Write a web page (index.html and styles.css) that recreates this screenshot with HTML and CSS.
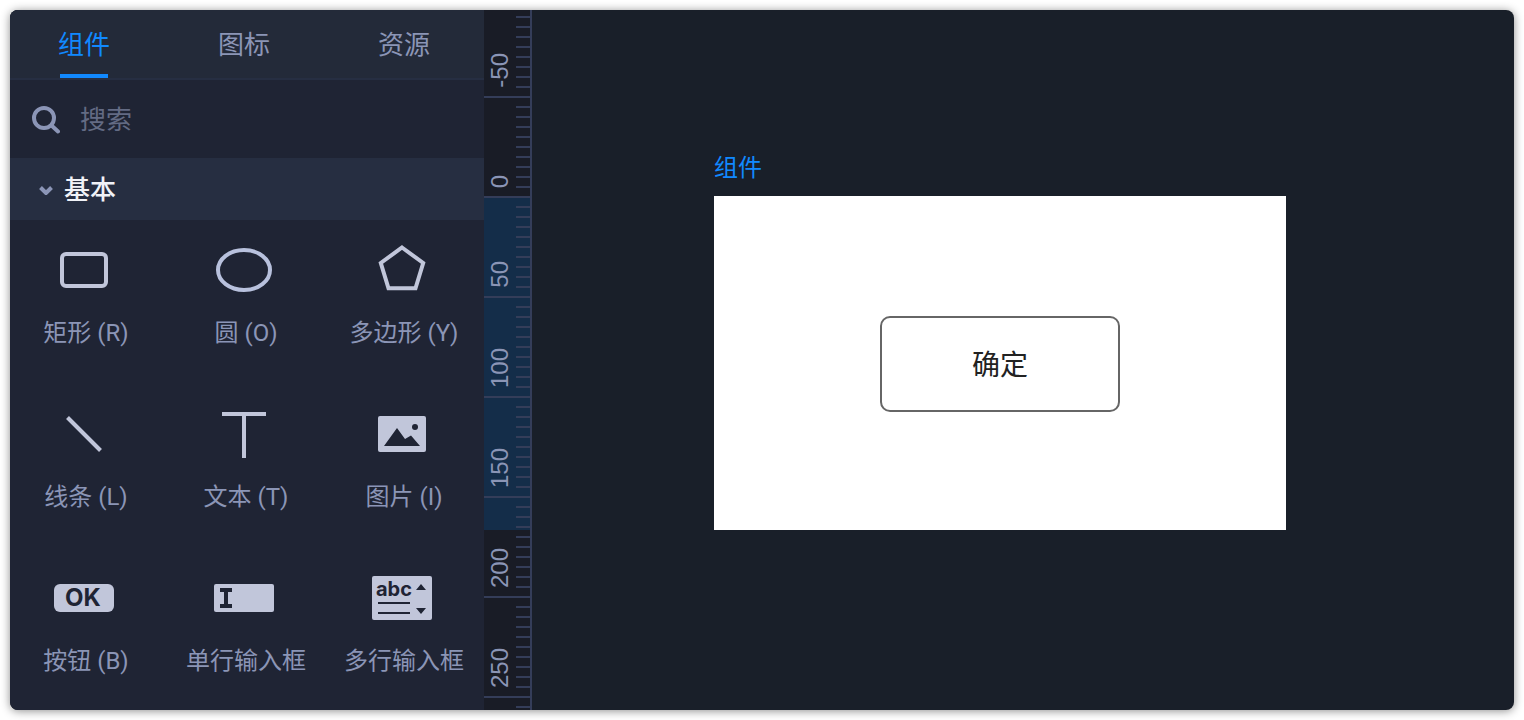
FILE: index.html
```html
<!DOCTYPE html>
<html lang="zh-CN">
<head>
<meta charset="utf-8">
<title>组件</title>
<link rel="stylesheet" href="styles.css">
</head>
<body>
<div class="app">
  <aside class="sidebar">
    <nav class="tabs">
      <button class="tab tab-active" type="button">组件</button>
      <button class="tab" type="button">图标</button>
      <button class="tab" type="button">资源</button>
    </nav>
    <label class="search">
      <svg class="search-icon" width="30" height="30" viewBox="0 0 30 30" fill="none" stroke="#8b95b6" stroke-width="4"><circle cx="14" cy="13" r="10"/><path d="M21.500 20.500L28 26.500" stroke-linecap="round"/></svg>
      <input class="search-input" type="search" placeholder="搜索" aria-label="搜索">
    </label>
    <button class="group" type="button">
      <svg width="14" height="14" viewBox="0 0 14 14" fill="none" stroke="#8b95b6" stroke-width="4"><path d="M1.500 6.500L7 12L12.500 6.500"/></svg>
      <span>基本</span>
    </button>
    <div class="tiles">
      <button class="tile" type="button">
        <svg class="tile-icon" viewBox="0 0 64 60"><rect x="10" y="14" width="44" height="32" rx="4" fill="none" stroke="#c1c6da" stroke-width="4"/></svg>
        <span class="tile-label">矩形 (R)</span>
      </button>
      <button class="tile" type="button">
        <svg class="tile-icon" viewBox="0 0 64 60"><ellipse cx="32" cy="30" rx="26" ry="20" fill="none" stroke="#b8c1dd" stroke-width="4"/></svg>
        <span class="tile-label">圆 (O)</span>
      </button>
      <button class="tile" type="button">
        <svg class="tile-icon" viewBox="0 0 64 60"><path d="M32 7.500L53.200 23L45.500 48.300H18.500L10.800 23Z" fill="none" stroke="#c1c6da" stroke-width="4"/></svg>
        <span class="tile-label">多边形 (Y)</span>
      </button>
      <button class="tile" type="button">
        <svg class="tile-icon" viewBox="0 0 64 60"><path d="M15.500 13.500L48.500 46.500" fill="none" stroke="#c1c6da" stroke-width="4"/></svg>
        <span class="tile-label">线条 (L)</span>
      </button>
      <button class="tile" type="button">
        <svg class="tile-icon" viewBox="0 0 64 60"><path d="M10 10H54M32 10V54" fill="none" stroke="#c1c6da" stroke-width="4"/></svg>
        <span class="tile-label">文本 (T)</span>
      </button>
      <button class="tile" type="button">
        <svg class="tile-icon" viewBox="0 0 64 60"><rect x="8" y="12" width="48" height="36" rx="2" fill="#c1c6da"/><path d="M14 42L27 24L35 35L41 31.500L50 42Z" fill="#1f2434"/><circle cx="45" cy="23" r="3" fill="#1f2434"/></svg>
        <span class="tile-label">图片 (I)</span>
      </button>
      <button class="tile" type="button">
        <svg class="tile-icon" viewBox="0 0 64 60"><rect x="2" y="16" width="60" height="28" rx="6" fill="#c1c6da"/><text class="ok-text" x="31" y="38" text-anchor="middle">OK</text></svg>
        <span class="tile-label">按钮 (B)</span>
      </button>
      <button class="tile" type="button">
        <svg class="tile-icon" viewBox="0 0 64 60"><rect x="2" y="16" width="60" height="28" rx="2" fill="#c1c6da"/><path d="M8 22H20M14 22V38M8 38H20" fill="none" stroke="#1f2434" stroke-width="4"/></svg>
        <span class="tile-label">单行输入框</span>
      </button>
      <button class="tile" type="button">
        <svg class="tile-icon" viewBox="0 0 64 60"><rect x="2" y="8" width="60" height="44" rx="2" fill="#c1c6da"/><text class="abc-text" x="24" y="28" text-anchor="middle">abc</text><path d="M8 35H40M8 45H40" stroke="#1f2434" stroke-width="2"/><path d="M46 22L51 16L56 22ZM46 40L51 46L56 40Z" fill="#1f2434"/></svg>
        <span class="tile-label">多行输入框</span>
      </button>
    </div>
  </aside>
  <div class="ruler">
    <div class="mark mark-first"><span>-50</span></div>
    <div class="mark"><span>0</span></div>
    <div class="mark"><span>50</span></div>
    <div class="mark"><span>100</span></div>
    <div class="mark"><span>150</span></div>
    <div class="mark"><span>200</span></div>
    <div class="mark"><span>250</span></div>
  </div>
  <main class="canvas">
    <section class="frame">
      <h1 class="frame-title">组件</h1>
      <div class="artboard">
        <button class="confirm" type="button">确定</button>
      </div>
    </section>
  </main>
</div>
</body>
</html>
```

FILE: styles.css
```css
* {
  box-sizing: border-box;
}

body {
  margin: 0;
  padding: 10px;
  background: #fff;
  font-family: Roboto, "Noto Sans CJK SC", sans-serif;
}

button {
  margin: 0;
  padding: 0;
  border: 0;
  background: none;
  color: inherit;
  font: inherit;
}

.app {
  display: flex;
  height: calc(100vh - 20px);
  border-radius: 8px;
  overflow: hidden;
  background: #191f29;
  box-shadow: 0 1px 10px rgba(0, 0, 0, 0.45);
}

.sidebar {
  flex: none;
  width: 474px;
  background: #1f2434;
  color: #8b95b6;
}

.tabs {
  display: flex;
  gap: 12px;
  height: 70px;
  padding-right: 6px;
  background: #232a39;
  border-bottom: 2px solid #262e42;
}

.tab {
  position: relative;
  flex: 1;
  padding-bottom: 4px;
  font-size: 26px;
}

.tab-active {
  color: #1189ff;
}

.tab-active::after {
  content: "";
  position: absolute;
  left: 50px;
  right: 50px;
  bottom: 0;
  height: 4px;
  background: #1189ff;
}

.search {
  display: flex;
  align-items: center;
  gap: 20px;
  height: 78px;
  padding: 2px 20px 0;
}

.search-icon {
  flex: none;
}

.search-input {
  flex: 1;
  min-width: 0;
  padding: 0;
  border: 0;
  outline: 0;
  background: none;
  color: #c1c6da;
  font: inherit;
  font-size: 26px;
}

.search-input::placeholder {
  color: #636b84;
}

.group {
  display: flex;
  align-items: center;
  gap: 11px;
  width: 100%;
  height: 62px;
  padding: 0 0 3px 29px;
  background: #262e41;
  color: #f0f2f7;
  font-size: 26px;
  font-weight: 500;
}

.tiles {
  display: grid;
  grid-template-columns: 148fr 148fr 144fr;
  grid-auto-rows: 164px;
  column-gap: 12px;
  padding-right: 10px;
}

.tile {
  display: flex;
  flex-direction: column;
  align-items: center;
  justify-content: flex-start;
  gap: 16px;
  padding-top: 20px;
}

.tile-icon {
  flex: none;
  width: 64px;
  height: 60px;
}

.tile-label {
  padding-left: 4px;
  font-size: 24px;
  line-height: 34px;
  white-space: nowrap;
}

.ok-text {
  fill: #1f2434;
  font: 700 24px Inter, sans-serif;
}

.abc-text {
  fill: #1f2434;
  font: 700 20px Inter, sans-serif;
}

.ruler {
  flex: none;
  width: 48px;
  overflow: hidden;
  border-right: 2px solid #343d59;
  background:
    repeating-linear-gradient(#343d59 0 2px, transparent 2px 10px) right 6px / 14px 100% no-repeat,
    linear-gradient(#142d49, #142d49) 0 186px / 100% 334px no-repeat,
    #191c26;
}

.mark {
  display: flex;
  align-items: flex-end;
  height: 100px;
  padding: 0 0 8px 2px;
  border-bottom: 2px solid #343d59;
  color: #8b95b6;
  font: 24px/28px "Liberation Sans", Arial, sans-serif;
}

.mark-first {
  height: 88px;
}

.mark span {
  writing-mode: vertical-rl;
  transform: rotate(180deg);
}

.canvas {
  flex: 1;
  min-width: 0;
  padding: 140px 0 0 182px;
}

.frame {
  width: 572px;
}

.frame-title {
  margin: 0 0 10px;
  color: #1189ff;
  font-size: 24px;
  font-weight: 400;
  line-height: 36px;
}

.artboard {
  display: grid;
  place-items: center;
  height: 334px;
  padding-top: 2px;
  background: #fff;
}

.confirm {
  width: 240px;
  height: 96px;
  padding-bottom: 2px;
  border: 2px solid #666;
  border-radius: 10px;
  color: #222;
  font-size: 28px;
}
```
